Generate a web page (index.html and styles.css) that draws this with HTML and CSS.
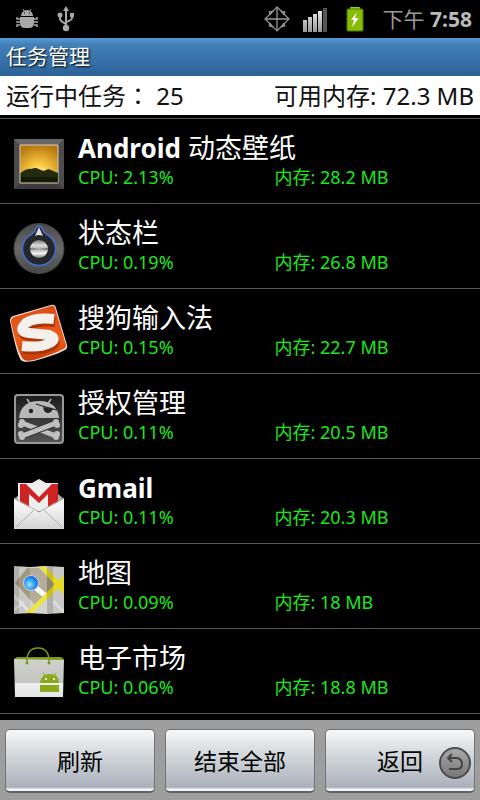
FILE: index.html
```html
<!DOCTYPE html>
<html lang="zh-CN">
<head>
    <meta charset="UTF-8">
    <meta name="viewport" content="width=device-width, initial-scale=1.0">
    <title>任务管理</title>
    <link rel="stylesheet" href="styles.css">
</head>
<body>
    <div class="statusbar">
        <div class="status-left">
            <svg width="22" height="22" viewBox="0 0 22 22" fill="#a8a8a8" stroke="#a8a8a8">
                <path d="M5 8a6 6 0 0 1 12 0z" stroke="none"/>
                <path d="M7 1l2 3M15 1l-2 3" fill="none"/>
                <path d="M4 9h14v6q0 5-5 5H9q-5 0-5-5z" stroke="none"/>
                <path d="M4 11H1V9M4 14H0M4 17H1v2M18 11h3V9M18 14h4M18 17h3v2" fill="none" stroke-width="1.5"/>
                <path d="M8 5h1M13 5h1" stroke="#000"/>
            </svg>
            <svg width="18" height="26" viewBox="0 0 18 26" fill="#a8a8a8" stroke="#a8a8a8">
                <path d="M9 4v18M3 10v3q0 2 6 5M15 9v3q0 2-6 4" fill="none" stroke-width="2"/>
                <path d="M9 0l3 5H6zM13 7h4v4h-4z" stroke="none"/>
                <circle cx="3" cy="9" r="2.5" stroke="none"/>
                <circle cx="9" cy="22" r="3.2" stroke="none"/>
            </svg>
        </div>
        <div class="status-right">
            <svg width="26" height="26" viewBox="0 0 26 26" fill="none" stroke="#999">
                <path d="M13 1l12 12-12 12L1 13z" stroke-width="1.2"/>
                <path d="M13 1v24M1 13h24" stroke-width="1.3"/>
                <path d="M5 6l4-1-3 4zM21 6l-4-1 3 4zM5 20l4 1-3-4zM21 20l-4 1 3-4z" fill="#888"/>
            </svg>
            <svg class="signal" width="25" height="25" viewBox="0 0 25 25">
                <defs>
                    <linearGradient id="sig" x2="0" y2="1"><stop stop-color="#e4e4e4"/><stop offset="1" stop-color="#999"/></linearGradient>
                </defs>
                <path d="M0 13h4v12H0zM5 10h4v15H5zM10 7h4v18h-4zM15 4h4v21h-4z" fill="url(#sig)"/>
                <path d="M20 1h4v24h-4z" fill="#555"/>
            </svg>
            <svg width="20" height="26" viewBox="0 0 20 26">
                <rect x="5" y="1" width="10" height="5" rx="1" fill="#9bd400"/>
                <rect x="2" y="3" width="16" height="22" rx="1" fill="#86bd00" stroke="#4b7a00"/>
                <path d="M12 6l-6 8h3l-2 7 7-9h-4z" fill="#fff"/>
            </svg>
            <span class="clock">下午 <b>7:58</b></span>
        </div>
    </div>
    <h1 class="titlebar">任务管理</h1>
    <div class="summary">
        <span>运行中任务<span class="colon" lang="zh-TW">：</span> 25</span>
        <span>可用内存: 72.3 MB</span>
    </div>
    <ul class="tasks">
        <li class="task">
            <svg class="icon" viewBox="0 0 60 60">
                <defs>
                    <radialGradient id="sun" cx=".5" cy=".75" r=".75"><stop stop-color="#fff6b0"/><stop offset=".35" stop-color="#f8c840"/><stop offset="1" stop-color="#b87810"/></radialGradient>
                </defs>
                <path d="M5 5h50v50H5z" fill="#4c4c4c"/>
                <path d="M5 5h50l-6 6H11z" fill="#666"/>
                <path d="M5 55h50l-6-6H11z" fill="#3c3c40"/>
                <path d="M11 11h38v38H11z" fill="url(#sun)" stroke="#d8ccc0"/>
                <path d="M11.500 39q7-5 11-4 4-2 7 0l5 2 5-2q3 1 9.500 4v9.500h-37.500z" fill="#242a0c"/>
                <path d="M12 43h36v5H12z" fill="#14180a"/>
            </svg>
            <div class="info">
                <h2 class="name"><b>Android</b> 动态壁纸</h2>
                <p class="usage"><span>CPU: 2.13%</span><span>内存: 28.2 MB</span></p>
            </div>
        </li>
        <li class="task">
            <svg class="icon" viewBox="0 0 60 60">
                <defs>
                    <linearGradient id="dial" x2="0" y2="1"><stop stop-color="#4a4a4a"/><stop offset=".5" stop-color="#6a6a6a"/><stop offset="1" stop-color="#484848"/></linearGradient>
                    <linearGradient id="knob" x2="0" y2="1"><stop stop-color="#777"/><stop offset=".3" stop-color="#ddd"/><stop offset=".5" stop-color="#aaa"/><stop offset=".75" stop-color="#f4f4f4"/><stop offset="1" stop-color="#777"/></linearGradient>
                </defs>
                <circle cx="30" cy="29.500" r="25" fill="url(#dial)" stroke="#444"/>
                <path d="M23 15q3-2 4-6 3-4 6 0 1 4 4 6a16.500 16.500 0 1 1-14 0z" fill="#25272c" stroke="#3f70d0" stroke-width="1.500"/>
                <path d="M30 8l4 9q-4-2-8 0z" fill="#ddd"/>
                <circle cx="30" cy="30" r="9" fill="url(#knob)"/>
                <path d="M21 29l9 1-9 1zM39 29l-9 1 9 1z" fill="#777"/>
            </svg>
            <div class="info">
                <h2 class="name">状态栏</h2>
                <p class="usage"><span>CPU: 0.19%</span><span>内存: 26.8 MB</span></p>
            </div>
        </li>
        <li class="task">
            <svg class="icon" viewBox="0 0 60 60">
                <defs>
                    <linearGradient id="orange" x2="0" y2="1"><stop stop-color="#d94f18"/><stop offset=".6" stop-color="#f05a18"/><stop offset="1" stop-color="#c83c08"/></linearGradient>
                </defs>
                <path d="M4 12L42 1q4-1 5 3l11 37q1 3-2 5-9 5-31 11-11 2-13-1Q8 52 1 17q0-4 3-5z" fill="#e8ddd5"/>
                <path d="M5 13L42 2q3-1 4 2l11 37q0 3-3 4-9 5-29 11-9 2-11-1Q8 47 2 18q0-4 3-5z" fill="url(#orange)"/>
                <path d="M45 16Q26 14 17 20q-9 9 3 10l20 2q9 3 1 8-9 5-28 3" transform="translate(1 2)" fill="none" stroke="#a93408" stroke-width="10"/>
                <path d="M45 15Q26 13 17 19q-9 9 3 10l20 2q9 3 1 8-9 5-28 3" fill="none" stroke="#f4f0ec" stroke-width="10"/>
            </svg>
            <div class="info">
                <h2 class="name">搜狗输入法</h2>
                <p class="usage"><span>CPU: 0.15%</span><span>内存: 22.7 MB</span></p>
            </div>
        </li>
        <li class="task">
            <svg class="icon" viewBox="0 0 60 60">
                <defs>
                    <linearGradient id="plate" x2="0" y2="1"><stop stop-color="#1c1c1c"/><stop offset="1" stop-color="#555"/></linearGradient>
                </defs>
                <rect x="6" y="6" width="48" height="48" rx="3" fill="url(#plate)" stroke="#999" stroke-width="2"/>
                <path d="M10 29q2-17 20-17t20 17z" fill="#b8b8b8"/>
                <path d="M18 10l4 6M42 10l-4 6" stroke="#b8b8b8" stroke-width="1.500"/>
                <circle cx="22" cy="22" r="2.200" fill="#222"/>
                <path d="M27 15q9 3 21 6" fill="none" stroke="#222" stroke-width="1.200"/>
                <path d="M34 18l10 2q-2 4-5 4-4 0-5-6z" fill="#222"/>
                <g stroke="#c0c0c0" stroke-width="5" fill="#c0c0c0">
                    <path d="M13 34l34 13"/>
                    <path d="M13 47l34-13" stroke="#333" stroke-width="7"/>
                    <path d="M13 47l34-13"/>
                </g>
                <g fill="#c0c0c0">
                    <circle cx="13" cy="33" r="3"/><circle cx="12" cy="36" r="3"/>
                    <circle cx="47" cy="33" r="3"/><circle cx="48" cy="36" r="3"/>
                    <circle cx="12" cy="45" r="3"/><circle cx="13" cy="48" r="3"/>
                    <circle cx="48" cy="45" r="3"/><circle cx="47" cy="48" r="3"/>
                </g>
            </svg>
            <div class="info">
                <h2 class="name">授权管理</h2>
                <p class="usage"><span>CPU: 0.11%</span><span>内存: 20.5 MB</span></p>
            </div>
        </li>
        <li class="task">
            <svg class="icon" viewBox="0 0 60 60">
                <defs>
                    <linearGradient id="env" x2="0" y2="1"><stop stop-color="#fff"/><stop offset="1" stop-color="#d4d4d4"/></linearGradient>
                </defs>
                <path d="M5 25l6-5h38l6 5v12H5z" fill="#aaa"/>
                <path d="M9 9h14l7-4 7 4h12v28H9z" fill="#eee"/>
                <path d="M11 10h6l13 13 13-13h6v23H39V20l-9 9-10-9v13H11z" fill="#cf2424"/>
                <path d="M5 25l25 13 25-13v30H5z" fill="url(#env)"/>
                <path d="M5 24l25 14 25-14M7 53l18-17M53 53L35 36" fill="none" stroke="#b0b0b0"/>
            </svg>
            <div class="info">
                <h2 class="name"><b>Gmail</b></h2>
                <p class="usage"><span>CPU: 0.11%</span><span>内存: 20.3 MB</span></p>
            </div>
        </li>
        <li class="task">
            <svg class="icon" viewBox="0 0 60 60">
                <defs>
                    <clipPath id="sheet"><path d="M5 7l16 1 17-1 17 1v46l-17 1-17-1-16 1z"/></clipPath>
                    <radialGradient id="pin" cx=".4" cy=".6" r=".6"><stop stop-color="#a0e8ff"/><stop offset=".5" stop-color="#3aa6f4"/><stop offset="1" stop-color="#1468d8"/></radialGradient>
                </defs>
                <g clip-path="url(#sheet)">
                    <path d="M0 0h60v60H0z" fill="#c8c8c4"/>
                    <path d="M6 24L18 9h12l16 16-19 22z" fill="#a39880"/>
                    <path d="M4 36l20 20M3 52l12-9" stroke="#e0e0e0" stroke-width="3"/>
                    <path d="M27 29l11 9" stroke="#fff" stroke-width="5"/>
                    <path d="M30 4l28 31M57 18L16 58" stroke="#e8dc18" stroke-width="5"/>
                    <path d="M44 42l14 14" stroke="#dcdcdc" stroke-width="3"/>
                    <path d="M21 0h17v60H21z" fill="#fff" fill-opacity=".2"/>
                    <path d="M38 0h6v60h-6zM5 0h5v60H5z" fill="#000" fill-opacity=".12"/>
                </g>
                <circle cx="22" cy="24" r="7.500" fill="url(#pin)" stroke="#c0d8ec"/>
            </svg>
            <div class="info">
                <h2 class="name">地图</h2>
                <p class="usage"><span>CPU: 0.09%</span><span>内存: 18 MB</span></p>
            </div>
        </li>
        <li class="task">
            <svg class="icon" viewBox="0 0 60 60">
                <defs>
                    <linearGradient id="bag" x2="0" y2="1"><stop stop-color="#d0d0cc"/><stop offset=".62" stop-color="#c4c4c0"/><stop offset=".64" stop-color="#eee"/><stop offset="1" stop-color="#e4e4e4"/></linearGradient>
                </defs>
                <path d="M5 15l3-2h44l3 2v3H5z" fill="#7e9818"/>
                <path d="M5 15l50 1-1 37H6z" fill="url(#bag)"/>
                <path d="M18 20q-1-16 11-16t11 16" fill="none" stroke="#7e9818" stroke-width="1.500"/>
                <circle cx="18" cy="19" r="1.500" fill="#7e9818"/><circle cx="40" cy="19" r="1.500" fill="#7e9818"/>
                <path d="M31 39q1-9 10-9t9 9zM31 41h19v7H31z" fill="#8aaa1c"/>
                <path d="M34 29l2 3M47 29l-2 3" stroke="#8aaa1c"/>
                <circle cx="37" cy="35" r="1" fill="#fff"/><circle cx="45" cy="35" r="1" fill="#fff"/>
            </svg>
            <div class="info">
                <h2 class="name">电子市场</h2>
                <p class="usage"><span>CPU: 0.06%</span><span>内存: 18.8 MB</span></p>
            </div>
        </li>
    </ul>
    <div class="actions">
        <button type="button">刷新</button>
        <button type="button">结束全部</button>
        <button type="button">返回</button>
        <svg class="back" width="34" height="34" viewBox="0 0 34 34">
            <defs>
                <linearGradient id="disc" x2="0" y2="1"><stop stop-color="#aaa"/><stop offset="1" stop-color="#777"/></linearGradient>
            </defs>
            <circle cx="17" cy="17" r="15" fill="url(#disc)" stroke="#4c4c4c" stroke-width="2"/>
            <path d="M10 12h9q5 1 5 6t-5 5h-8" fill="none" stroke="#444" stroke-width="2"/>
            <path d="M14 8l-4 4 4 4" fill="none" stroke="#444" stroke-width="2"/>
        </svg>
    </div>
</body>
</html>
```
FILE: styles.css
```css
* {
    box-sizing: border-box;
}
body {
    font-family: "Noto Sans", "Noto Sans CJK SC", sans-serif;
    background-color: #000;
    color: #fff;
    margin: 0;
    display: flex;
    flex-direction: column;
    min-height: 100vh;
}
.statusbar {
    display: flex;
    justify-content: space-between;
    align-items: center;
    height: 38px;
    padding: 0 8px 0 16px;
}
.status-left {
    display: flex;
    align-items: center;
    gap: 19px;
}
.status-right {
    display: flex;
    align-items: center;
    gap: 13px;
}
.signal {
    margin-right: 4px;
}
.clock {
    margin-left: 5px;
    font-size: 21px;
    line-height: 38px;
    color: #999;
}
.clock b {
    color: #bbb;
}
.titlebar {
    margin: 0;
    padding: 0 6px 2px;
    font-size: 21px;
    font-weight: normal;
    line-height: 36px;
    background: linear-gradient(#5a9ad8, #4381b9 15%, #2b6298);
    text-shadow: 1px 1px 2px #000;
}
.summary {
    display: flex;
    justify-content: space-between;
    padding: 0 6px;
    font-size: 24px;
    line-height: 39px;
    background-color: #fff;
    color: #111;
    margin-bottom: 3px;
}
.colon {
    font-family: "Noto Sans CJK TC", sans-serif;
    line-height: 1;
}
.tasks {
    list-style: none;
    margin: 0;
    padding: 0;
    flex: 1;
    border-top: 1px solid #555;
}
.task {
    display: flex;
    align-items: flex-start;
    gap: 9px;
    height: 85px;
    padding: 12px 9px 0;
    border-bottom: 1px solid #555;
}
.icon {
    width: 60px;
    height: 60px;
    margin-top: 3px;
}
.info {
    flex: 1;
}
.name {
    margin: 0;
    font-size: 27px;
    font-weight: normal;
    line-height: 34px;
}
.name b {
    font-size: 26px;
}
.usage {
    display: flex;
    margin: 0;
    font-size: 18px;
    line-height: 24px;
    color: #1ee61e;
}
.usage span {
    flex: 1;
}
.actions {
    position: relative;
    display: flex;
    gap: 10px;
    padding: 9px 5px 7px;
    background-color: #9e9e9e;
}
.actions button {
    flex: 1;
    height: 64px;
    border: 1px solid #70747a;
    border-bottom: 2px solid #606468;
    border-radius: 5px;
    background: linear-gradient(#f6f7f8, #d4d8dc 40%, #aab1bb 94%, #f4f4f4 97%);
    font-family: inherit;
    font-size: 23px;
    color: #000;
    padding: 0 0 2px;
}
.back {
    position: absolute;
    right: 8px;
    bottom: 20px;
}
```
